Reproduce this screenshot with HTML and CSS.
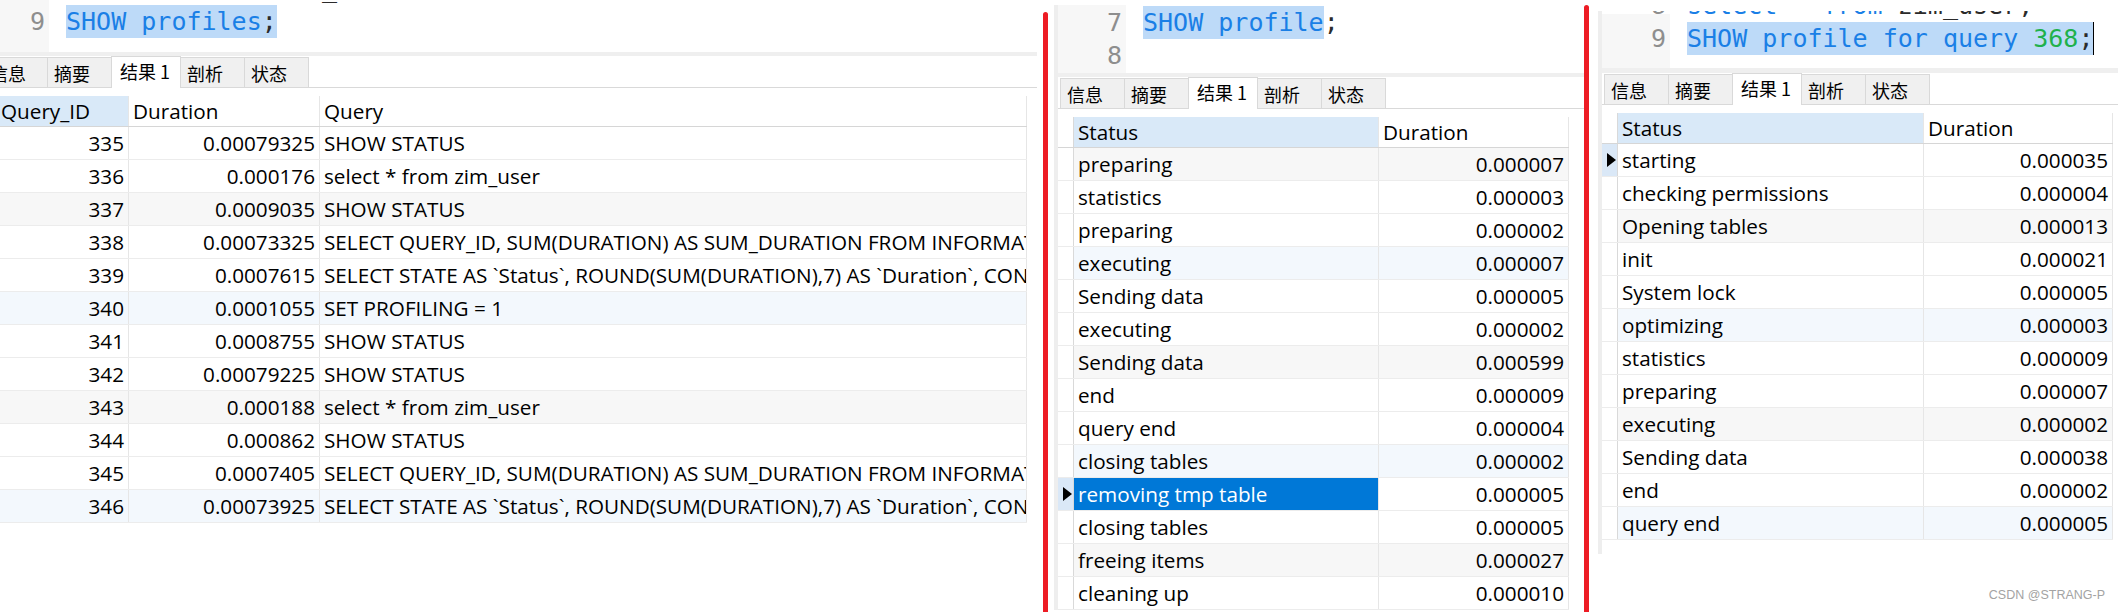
FILE: index.html
```html
<!DOCTYPE html>
<html lang="zh-CN">
<head>
<meta charset="utf-8">
<title>SHOW profile</title>
<link rel="stylesheet" href="styles.css">
</head>
<body>
<div class="screen">

  <section class="panel panel-1">
    <div class="frame">
      <div class="editor">
        <div class="lines">
          <div class="line"><span class="ln">8</span><span class="src"><span class="kw">select</span> * <span class="kw">from</span> zim_user;</span></div>
          <div class="line"><span class="ln">9</span><span class="src"><span class="sel"><span class="kw">SHOW</span> <span class="kw">profiles</span>;</span></span></div>
        </div>
      </div>
      <div class="splitter"></div>
      <div class="tabs">
        <div class="tab">信息</div>
        <div class="tab">摘要</div>
        <div class="tab active">结果 1</div>
        <div class="tab">剖析</div>
        <div class="tab">状态</div>
      </div>
      <div class="table">
        <div class="row head"><div class="ind"></div><div class="c hc sorted">Query_ID</div><div class="c hc">Duration</div><div class="c hc">Query</div></div>
        <div class="row"><div class="ind"></div><div class="c num">335</div><div class="c num">0.00079325</div><div class="c">SHOW STATUS</div></div>
        <div class="row"><div class="ind"></div><div class="c num">336</div><div class="c num">0.000176</div><div class="c">select * from zim_user</div></div>
        <div class="row gray"><div class="ind"></div><div class="c num">337</div><div class="c num">0.0009035</div><div class="c">SHOW STATUS</div></div>
        <div class="row"><div class="ind"></div><div class="c num">338</div><div class="c num">0.00073325</div><div class="c">SELECT QUERY_ID, SUM(DURATION) AS SUM_DURATION FROM INFORMATION_SCHEMA.PROFILING GROUP BY QUERY_ID</div></div>
        <div class="row"><div class="ind"></div><div class="c num">339</div><div class="c num">0.0007615</div><div class="c">SELECT STATE AS `Status`, ROUND(SUM(DURATION),7) AS `Duration`, CONCAT(ROUND(SUM(DURATION)/0.000733*100,3), '%') AS `Percentage` FROM INFORMATION_SCHEMA.PROFILING</div></div>
        <div class="row blue"><div class="ind"></div><div class="c num">340</div><div class="c num">0.0001055</div><div class="c">SET PROFILING = 1</div></div>
        <div class="row"><div class="ind"></div><div class="c num">341</div><div class="c num">0.0008755</div><div class="c">SHOW STATUS</div></div>
        <div class="row"><div class="ind"></div><div class="c num">342</div><div class="c num">0.00079225</div><div class="c">SHOW STATUS</div></div>
        <div class="row gray"><div class="ind"></div><div class="c num">343</div><div class="c num">0.000188</div><div class="c">select * from zim_user</div></div>
        <div class="row"><div class="ind"></div><div class="c num">344</div><div class="c num">0.000862</div><div class="c">SHOW STATUS</div></div>
        <div class="row"><div class="ind"></div><div class="c num">345</div><div class="c num">0.0007405</div><div class="c">SELECT QUERY_ID, SUM(DURATION) AS SUM_DURATION FROM INFORMATION_SCHEMA.PROFILING GROUP BY QUERY_ID</div></div>
        <div class="row blue"><div class="ind"></div><div class="c num">346</div><div class="c num">0.00073925</div><div class="c">SELECT STATE AS `Status`, ROUND(SUM(DURATION),7) AS `Duration`, CONCAT(ROUND(SUM(DURATION)/0.000740*100,3), '%') AS `Percentage` FROM INFORMATION_SCHEMA.PROFILING</div></div>
      </div>
    </div>
  </section>

  <div class="marker marker-1"></div>

  <section class="panel panel-2">
    <div class="frame">
      <div class="editor">
        <div class="lines">
          <div class="line"><span class="ln">7</span><span class="src"><span class="sel"><span class="kw">SHOW</span> <span class="kw">profile</span></span>;</span></div>
          <div class="line"><span class="ln">8</span><span class="src"></span></div>
        </div>
      </div>
      <div class="splitter"></div>
      <div class="tabs">
        <div class="tab">信息</div>
        <div class="tab">摘要</div>
        <div class="tab active">结果 1</div>
        <div class="tab">剖析</div>
        <div class="tab">状态</div>
      </div>
      <div class="table">
        <div class="row head"><div class="ind"></div><div class="c hc sorted">Status</div><div class="c hc">Duration</div></div>
        <div class="row gray"><div class="ind"></div><div class="c">preparing</div><div class="c num">0.000007</div></div>
        <div class="row"><div class="ind"></div><div class="c">statistics</div><div class="c num">0.000003</div></div>
        <div class="row"><div class="ind"></div><div class="c">preparing</div><div class="c num">0.000002</div></div>
        <div class="row blue"><div class="ind"></div><div class="c">executing</div><div class="c num">0.000007</div></div>
        <div class="row"><div class="ind"></div><div class="c">Sending data</div><div class="c num">0.000005</div></div>
        <div class="row"><div class="ind"></div><div class="c">executing</div><div class="c num">0.000002</div></div>
        <div class="row gray"><div class="ind"></div><div class="c">Sending data</div><div class="c num">0.000599</div></div>
        <div class="row"><div class="ind"></div><div class="c">end</div><div class="c num">0.000009</div></div>
        <div class="row"><div class="ind"></div><div class="c">query end</div><div class="c num">0.000004</div></div>
        <div class="row blue"><div class="ind"></div><div class="c">closing tables</div><div class="c num">0.000002</div></div>
        <div class="row"><div class="ind current"><svg class="arrow" width="9" height="14" viewBox="0 0 9 14"><path d="M0 0L9 7L0 14Z"/></svg></div><div class="c selected">removing tmp table</div><div class="c num">0.000005</div></div>
        <div class="row"><div class="ind"></div><div class="c">closing tables</div><div class="c num">0.000005</div></div>
        <div class="row gray"><div class="ind"></div><div class="c">freeing items</div><div class="c num">0.000027</div></div>
        <div class="row"><div class="ind"></div><div class="c">cleaning up</div><div class="c num">0.000010</div></div>
      </div>
    </div>
  </section>

  <div class="marker marker-2"></div>

  <section class="panel panel-3">
    <div class="frame">
      <div class="editor">
        <div class="lines">
          <div class="line"><span class="ln">8</span><span class="src"><span class="kw">select</span> * <span class="kw">from</span> zim_user;</span></div>
          <div class="line"><span class="ln">9</span><span class="src"><span class="sel"><span class="kw">SHOW</span> <span class="kw">profile</span> <span class="kw">for</span> <span class="kw">query</span> <span class="nm">368</span>;</span><span class="caret"></span></span></div>
        </div>
      </div>
      <div class="splitter"></div>
      <div class="tabs">
        <div class="tab">信息</div>
        <div class="tab">摘要</div>
        <div class="tab active">结果 1</div>
        <div class="tab">剖析</div>
        <div class="tab">状态</div>
      </div>
      <div class="table">
        <div class="row head"><div class="ind"></div><div class="c hc sorted">Status</div><div class="c hc">Duration</div></div>
        <div class="row"><div class="ind current"><svg class="arrow" width="9" height="14" viewBox="0 0 9 14"><path d="M0 0L9 7L0 14Z"/></svg></div><div class="c">starting</div><div class="c num">0.000035</div></div>
        <div class="row"><div class="ind"></div><div class="c">checking permissions</div><div class="c num">0.000004</div></div>
        <div class="row gray"><div class="ind"></div><div class="c">Opening tables</div><div class="c num">0.000013</div></div>
        <div class="row"><div class="ind"></div><div class="c">init</div><div class="c num">0.000021</div></div>
        <div class="row"><div class="ind"></div><div class="c">System lock</div><div class="c num">0.000005</div></div>
        <div class="row blue"><div class="ind"></div><div class="c">optimizing</div><div class="c num">0.000003</div></div>
        <div class="row"><div class="ind"></div><div class="c">statistics</div><div class="c num">0.000009</div></div>
        <div class="row"><div class="ind"></div><div class="c">preparing</div><div class="c num">0.000007</div></div>
        <div class="row gray"><div class="ind"></div><div class="c">executing</div><div class="c num">0.000002</div></div>
        <div class="row"><div class="ind"></div><div class="c">Sending data</div><div class="c num">0.000038</div></div>
        <div class="row"><div class="ind"></div><div class="c">end</div><div class="c num">0.000002</div></div>
        <div class="row blue"><div class="ind"></div><div class="c">query end</div><div class="c num">0.000005</div></div>
      </div>
    </div>
    <div class="watermark">CSDN @STRANG-P</div>
  </section>

</div>
</body>
</html>
```
FILE: styles.css
```css
html, body {
  margin: 0;
  padding: 0;
  background: #fff;
}
body {
  font-family: "Open Sans", "Noto Sans CJK SC", sans-serif;
  color: #000;
}
.screen {
  display: flex;
  width: 2118px;
  height: 612px;
  overflow: hidden;
  background: #fff;
}
.panel {
  flex: none;
  height: 612px;
  overflow: hidden;
  box-sizing: border-box;
}
.panel-1 {
  width: 1043px;
}
.panel-2 {
  width: 536px;
  padding-left: 6px;
  padding-top: 5px;
}
.panel-3 {
  flex: 1;
  padding-left: 9px;
  padding-top: 11px;
  position: relative;
}
.marker {
  flex: none;
  width: 5px;
  background: #ed1c24;
  border-radius: 3px 3px 0 0;
}
.marker-1 { margin-top: 12px; }
.marker-2 { margin-top: 5px; }

.frame {
  border-left: 4px solid #eeeeee;
}
.panel-1 .frame {
  margin-left: -23px;
  margin-right: 6px;
}
.panel-3 .frame {
  padding-bottom: 14px;
}

/* editor */
.editor {
  overflow: hidden;
  background: linear-gradient(to right, #f7f7f7 68px, #fff 68px);
  font-family: "DejaVu Sans Mono", monospace;
  font-size: 25px;
}
.panel-1 .editor { height: 52px; }
.panel-2 .editor { height: 68px; }
.panel-3 .editor {
  height: 57px;
  background:
    linear-gradient(to bottom, #fff 3px, transparent 3px),
    linear-gradient(to right, #f7f7f7 68px, #fff 68px);
}
.panel-1 .lines { margin-top: -28px; }
.panel-2 .lines { margin-top: 1px; }
.panel-3 .lines { margin-top: -22px; }
.line {
  display: flex;
  height: 33px;
  line-height: 33px;
  white-space: pre;
}
.ln {
  flex: none;
  width: 68px;
  box-sizing: border-box;
  padding-right: 4px;
  text-align: right;
  color: #8e8e8e;
}
.src {
  margin-left: 17px;
  color: #2b2b2b;
}
.sel {
  display: inline-block;
  background: #bddaf8;
}
.kw { color: #1a7fe6; }
.nm { color: #1fb14c; }
.caret {
  display: inline-block;
  width: 1px;
  height: 33px;
  background: #000;
  vertical-align: top;
}

.splitter {
  height: 4px;
  background: #efefef;
}
.panel-3 .splitter { height: 5px; }

/* tabs */
.tabs {
  display: flex;
  align-items: flex-end;
  height: 31px;
  padding-left: 2px;
  border-bottom: 1px solid #d9d9d9;
  font-family: "Noto Sans CJK SC", sans-serif;
  font-size: 18px;
}
.tab {
  flex: none;
  box-sizing: border-box;
  width: 65px;
  height: 30px;
  padding-left: 6px;
  line-height: 30px;
  background: #f0f0f0;
  border: 1px solid #d9d9d9;
  border-bottom: 0;
  margin-right: -1px;
  white-space: nowrap;
}
.tab.active {
  width: 70px;
  height: 32px;
  margin-bottom: -1px;
  padding-left: 8px;
  line-height: 28px;
  background: #fff;
}

/* grid */
.table {
  width: max-content;
  margin-top: 8px;
  font-size: 20.7px;
}
.row {
  display: grid;
  height: 33px;
  box-sizing: border-box;
  border-bottom: 1px solid #ececec;
}
.panel-1 .row { grid-template-columns: 16px 132px 191px 707px; }
.panel-2 .row { grid-template-columns: 16px 305px 190px; }
.panel-3 .row { grid-template-columns: 16px 306px 189px; }
.row.head {
  height: 31px;
  border-bottom-color: #d6d6d6;
}
.ind {
  border-right: 1px solid #d9d9d9;
  background: #fff;
  box-sizing: border-box;
}
.ind.current {
  background: #dae8f7;
  display: flex;
  align-items: center;
  padding-left: 5px;
}
.arrow { display: block; fill: #000; }
.c {
  box-sizing: border-box;
  padding: 0 4px;
  line-height: 32px;
  overflow: hidden;
  white-space: nowrap;
  text-overflow: clip;
  border-right: 1px solid #e6e6e6;
}
.hc { line-height: 30px; }
.hc.sorted { background: #d9e9f8; }
.num { text-align: right; }
.gray .c { background: #f7f7f7; }
.blue .c { background: #f3f8fd; }
.c.selected {
  background: #0078d7;
  color: #fff;
}

.watermark {
  position: absolute;
  right: 13px;
  bottom: 10px;
  font-family: "Liberation Sans", sans-serif;
  font-size: 12.5px;
  color: #a3a3a3;
}
```
